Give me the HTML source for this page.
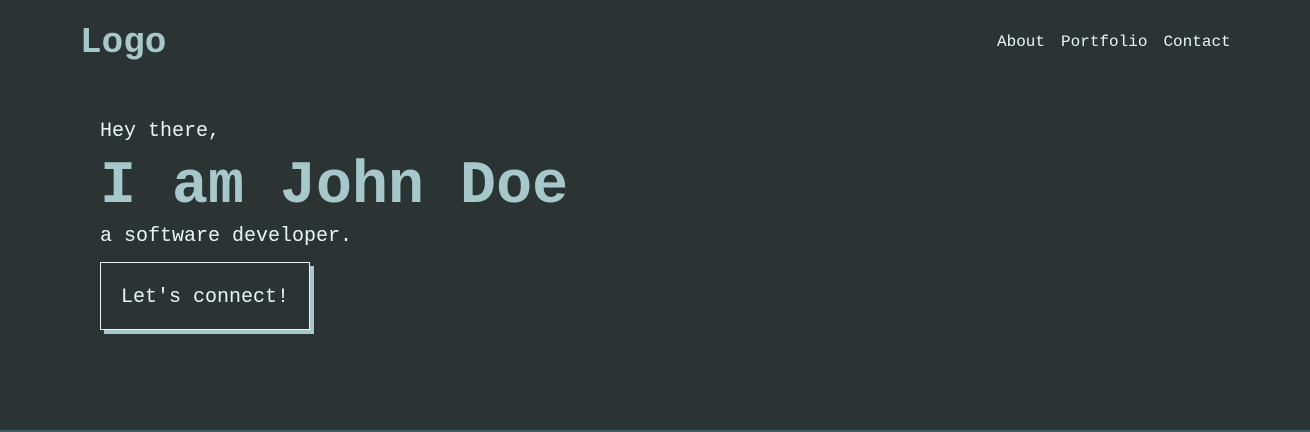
<!DOCTYPE html>
<html><head><style>
html,body{margin:0;padding:0;}
body{width:1310px;height:432px;background:#2c3333;font-family:"Liberation Mono",monospace;color:#e7f6f2;position:relative;overflow:hidden;}
.logo{position:absolute;left:80px;top:21px;font-size:36px;font-weight:bold;color:#a5c9ca;line-height:44px;}
.nav{position:absolute;left:997px;top:32px;font-size:16px;line-height:20px;}
.nav span{margin-right:16px;}
.hey{position:absolute;left:100px;top:120px;font-size:20px;line-height:24px;}
.name{position:absolute;left:100px;top:152px;font-size:60px;font-weight:bold;color:#a5c9ca;line-height:70px;}
.dev{position:absolute;left:100px;top:225px;font-size:20px;line-height:24px;}
.btn{position:absolute;left:100px;top:262px;width:208px;height:66px;border:1px solid #e7f6f2;box-shadow:4px 4px 0 #a5c9ca;font-size:20px;line-height:70px;text-align:center;box-sizing:content-box;}
.bottom{position:absolute;left:0;bottom:0;width:1310px;height:2px;background:#3d5d60;}
</style></head><body>
<div class="logo">Logo</div>
<div class="nav"><span>About</span><span>Portfolio</span><span style="margin:0">Contact</span></div>
<div class="hey">Hey there,</div>
<div class="name">I am John Doe</div>
<div class="dev">a software developer.</div>
<div class="btn">Let's connect!</div>
<div class="bottom"></div>
</body></html>
